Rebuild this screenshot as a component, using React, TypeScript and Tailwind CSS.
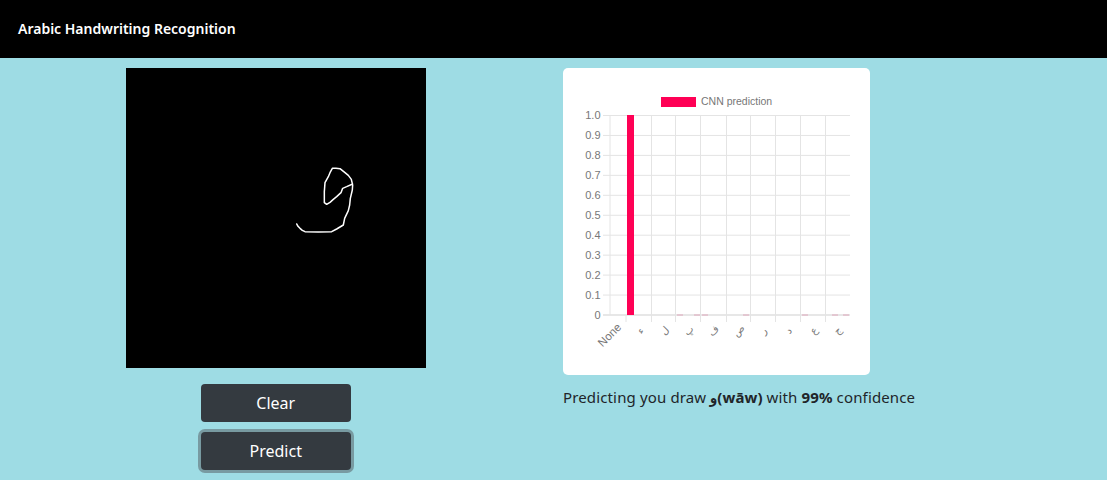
const yLabels = ["1.0", "0.9", "0.8", "0.7", "0.6", "0.5", "0.4", "0.3", "0.2", "0.1", "0"];
const vLines = [651, 675, 700, 726, 750, 775, 800, 825];
const xLabels: [string, number][] = [["ء", 643], ["ل", 667], ["ڀ", 691], ["ف", 716], ["ص", 741], ["ر", 766], ["د", 791], ["ع", 816], ["ج", 840]];
const blips = [680, 697, 705, 746, 805, 835, 846];

function Chart() {
  return (
    <svg viewBox="563 68 307 307" className="block w-full h-full" style={{ fontFamily: "'Liberation Sans', Arial, sans-serif" }}>
      <rect x="661" y="97" width="35" height="10" fill="#ff0055" />
      <text x="701" y="105" fontSize="10.5" fill="#777">CNN prediction</text>
      {yLabels.map((l, i) => {
        const y = 115.5 + i * 19.95;
        return (
          <g key={l}>
            <line x1="603" x2="850" y1={y} y2={y} stroke={i === 10 ? "#cfcfcf" : "#e4e4e4"} strokeWidth="1" />
            <text x="600.5" y={y + 3.8} fontSize="11" fill="#777" textAnchor="end">{l}</text>
          </g>
        );
      })}
      <line x1="610" x2="610" y1="115" y2="315" stroke="#e4e4e4" />
      <line x1="626" x2="626" y1="315" y2="322" stroke="#e4e4e4" />
      {vLines.map((x) => (
        <line key={x} x1={x + 0.5} x2={x + 0.5} y1="115" y2="322" stroke="#e4e4e4" />
      ))}
      <rect x="627" y="115" width="7" height="200" fill="#ff0055" />
      {blips.map((x) => (
        <line key={x} x1={x - 3} x2={x + 3} y1="315" y2="315" stroke="#e0a8bc" />
      ))}
      <text transform="translate(622 328) rotate(-45)" fontSize="11.5" fill="#777" textAnchor="end">None</text>
      {xLabels.map(([l, x]) => (
        <text key={x} transform={`translate(${x} 333) rotate(-45)`} fontSize="10" fill="#777" textAnchor="middle" style={{ fontFamily: "'DejaVu Sans', sans-serif" }}>{l}</text>
      ))}
    </svg>
  );
}

export default function App() {
  return (
    <div className="min-h-screen bg-[#9edce4] text-[#212529] font-['Noto_Sans','Open_Sans',sans-serif]">
      <header className="h-[58px] bg-black flex items-center px-[18px]">
        <span className="text-white text-sm font-semibold">Arabic Handwriting Recognition</span>
      </header>
      <main className="grid grid-cols-2">
        <section className="flex flex-col items-center pt-[10px] pr-[2px]">
          <div className="w-[300px] h-[300px] bg-black">
            <svg viewBox="126 68 300 300" className="block w-full h-full">
              <g transform="translate(280 150) scale(0.3333)">
                <polyline
                  fill="none"
                  stroke="#fff"
                  strokeWidth="4.5"
                  strokeLinejoin="round"
                  strokeLinecap="round"
                  points="50,222 54,229 60,235 67,241 75,245 115,246 155,245 170,237 190,225 194,205 205,182 209,165 211,145 217,120 218,105 214,88 205,76 195,68 180,56 168,55 157,55 150,68 145,80 135,98 133,125 133,158 140,163 150,157 160,148 170,140 183,128 188,115 200,110 218,102"
                />
              </g>
            </svg>
          </div>
          <button className="mt-4 w-[150px] h-[38px] rounded bg-[#343a40] text-white text-base">Clear</button>
          <button className="mt-[10px] w-[150px] h-[38px] rounded bg-[#343a40] text-white text-base ring-[3px] ring-[#52585d]/50">Predict</button>
        </section>
        <section className="pt-[10px] pl-[9.5px]">
          <div className="w-[307px] h-[307px] bg-white rounded-[5px] overflow-hidden">
            <Chart />
          </div>
          <p className="mt-[10px] text-[15px] leading-6 tracking-[0.14px]">
            Predicting you draw <b className="font-bold">و(wāw)</b> with <b className="font-bold">99%</b> confidence
          </p>
        </section>
      </main>
    </div>
  );
}
